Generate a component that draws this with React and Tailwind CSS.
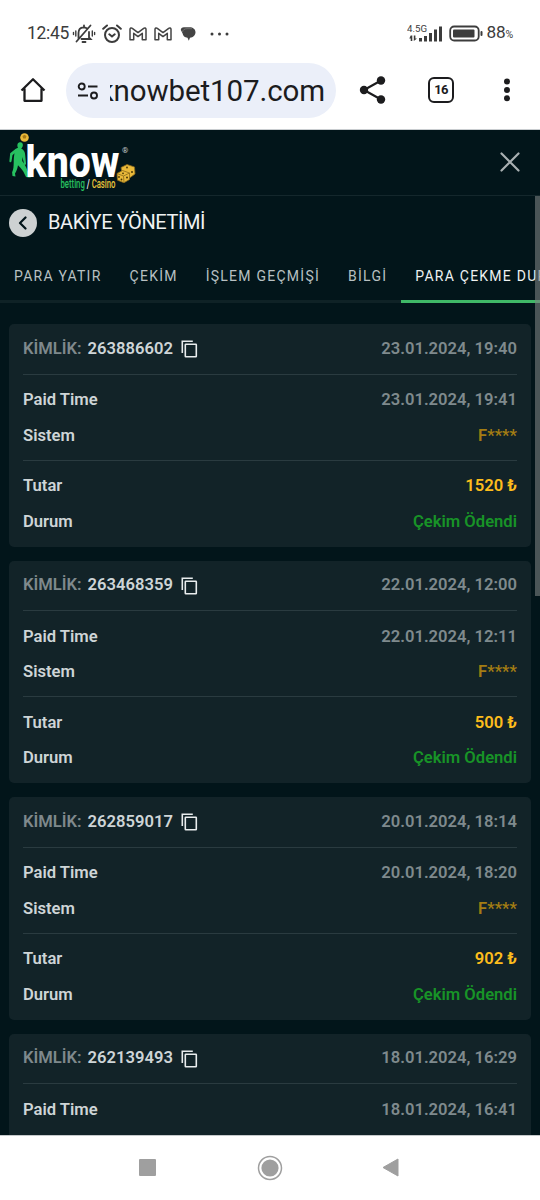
import React from 'react';

const transactions = [
  { id: '263886602', date: '23.01.2024, 19:40', paid: '23.01.2024, 19:41', system: 'F****', amount: '1520 ₺', status: 'Çekim Ödendi' },
  { id: '263468359', date: '22.01.2024, 12:00', paid: '22.01.2024, 12:11', system: 'F****', amount: '500 ₺', status: 'Çekim Ödendi' },
  { id: '262859017', date: '20.01.2024, 18:14', paid: '20.01.2024, 18:20', system: 'F****', amount: '902 ₺', status: 'Çekim Ödendi' },
  { id: '262139493', date: '18.01.2024, 16:29', paid: '18.01.2024, 16:41' },
];

const tabs = ['PARA YATIR', 'ÇEKİM', 'İŞLEM GEÇMİŞİ', 'BİLGİ', 'PARA ÇEKME DURUMU'];

const MailIcon = () => (
  <svg width="18" height="14" viewBox="0 0 18 14" fill="none" stroke="#444" strokeWidth="1.5" strokeLinejoin="round">
    <path d="M1 12.8V2.2C1 1 2.4.6 3.3 1.3L9 5.6l5.7-4.3C15.6.6 17 1 17 2.2v10.6h-3.7V6.3L9 9.6 4.7 6.3v6.5z" />
  </svg>
);

const StatusBar = () => (
  <div className="h-[62px] pt-[5px] flex items-center justify-between pl-[27px] pr-[27px] text-[#3c3c3c] shrink-0">
    <div className="flex items-center">
      <span className="text-[17.5px] w-[44px] tracking-[-0.3px] whitespace-nowrap">12:45</span>
      <svg className="ml-[1px]" width="24" height="20" viewBox="0 0 24 20" fill="none" stroke="#3c3c3c" strokeWidth="1.8" strokeLinecap="round">
        <path d="M6.5 14.5V9c0-3.200 2-5.500 5-5.700 1.400 0 2.300.400 3.200 1M17 8v5.500l1.500 1.500H9.500M12 3V1.500M10.500 18h3M4.500 17.500L18.500 1.500" />
        <path d="M3.800 7v5M20.300 7v5M1.500 8.500v2M22.600 8.500v2" strokeWidth="1.4" />
      </svg>
      <svg className="ml-[6px]" width="20" height="20" viewBox="0 0 20 20" fill="none" stroke="#3c3c3c" strokeWidth="2" strokeLinecap="round">
        <circle cx="10" cy="11" r="7" />
        <path d="M1.200 4.800L5 1.500M18.800 4.800L15 1.500M7.300 10.300l2.700 2.200 2.700-2.200" />
      </svg>
      <div className="flex gap-[7px] ml-[7px]">
        <MailIcon />
        <MailIcon />
      </div>
      <svg className="ml-[8px]" width="16" height="16" viewBox="0 0 16 16" fill="#444">
        <path d="M4 1.200h5.500c3.500 0 6 2 6 5s-2.500 5.300-5.500 5.500l-1.200 3L7.500 11.700C4.600 11.500 3 9.800 2.500 7.200L.8 4C.8 2.300 2 1.200 4 1.200z" />
        <path d="M2.500 6C2.700 4 4.500 2.700 7 2.700h5" stroke="#999" strokeWidth=".5" fill="none" />
      </svg>
      <svg className="ml-[14px]" width="20" height="4" viewBox="0 0 20 4" fill="#3c3c3c">
        <circle cx="2" cy="2" r="1.500" />
        <circle cx="9.500" cy="2" r="1.500" />
        <circle cx="17" cy="2" r="1.500" />
      </svg>
    </div>
    <div className="flex items-center">
      <svg width="37" height="20" viewBox="0 0 37 20" fill="#3c3c3c" className="font-[Roboto,sans-serif]">
        <text x="0" y="8" fontSize="9.500" textLength="20" lengthAdjust="spacingAndGlyphs">4.5G</text>
        <path d="M3.700 11.500h1.600V17H3.700v-2.500H2.300zM6.800 11.500h1.600v3H10L6.800 17z" />
        <path d="M12 14h3v3.500h-3zM17 12h3v5.500h-3zM22 9h3v8.500h-3zM27 5.500h3v12h-3zM32 2.500h3v15h-3z" />
      </svg>
      <svg className="ml-[5px]" width="34" height="17" viewBox="0 0 34 17">
        <rect x="1.200" y="1.500" width="28.500" height="14" rx="4" fill="none" stroke="#3c3c3c" strokeWidth="1.800" />
        <rect x="4" y="4.500" width="21.500" height="8" rx="1" fill="#3c3c3c" />
        <rect x="31.500" y="6" width="2" height="5" rx="1" fill="#3c3c3c" />
      </svg>
      <span className="ml-[4px] text-[17.2px] leading-5 tracking-[-0.2px]">
        88<span className="text-[10.5px]">%</span>
      </span>
    </div>
  </div>
);

const BrowserBar = () => (
  <div className="h-[68px] flex items-start shrink-0 pt-px border-b border-[#c9cdd0]">
    <svg className="ml-[20px] mt-[14px]" width="26" height="26" viewBox="0 0 26 26" fill="none" stroke="#1c1c1e" strokeWidth="2.300" strokeLinejoin="round">
      <path d="M1.500 13.500L13 2.300l11.500 11.200M4.500 11.500v12.300h17V11.500" />
    </svg>
    <div className="ml-[20px] w-[270px] h-[55px] rounded-full bg-[#ebeff9] flex items-center">
      <svg className="ml-[11px]" width="22" height="18" viewBox="0 0 22 18" fill="none" stroke="#1c1c1e" strokeWidth="1.900">
        <circle cx="4.700" cy="4.500" r="3" />
        <path d="M11 4.500h9.500M1 13.500h10" />
        <circle cx="17" cy="13.500" r="3" />
      </svg>
      {/* Long address keeps its end in view */}
      <div className="ml-[11px] w-[215px] overflow-hidden flex justify-end text-[29.5px] leading-[36px] text-[#1c1c1e]">
        <span className="tracking-[-0.1px]">knowbet107.com</span>
      </div>
    </div>
    <svg className="ml-[23px] mt-[13px]" width="28" height="28" viewBox="0 0 28 28" fill="#1c1c1e">
      <path d="M22 4.500L5 14l17 9.500" fill="none" stroke="#1c1c1e" strokeWidth="2.200" />
      <circle cx="22" cy="4.500" r="4.200" />
      <circle cx="5" cy="14" r="4.200" />
      <circle cx="22" cy="23.500" r="4.200" />
    </svg>
    <div className="ml-[41px] mt-[14px] w-[26px] h-[26px] rounded-[6px] border-[2.5px] border-[#1c1c1e] flex items-center justify-center text-[13px] tracking-[-0.6px] font-bold text-[#1c1c1e]">
      16
    </div>
    <svg className="ml-[49px] mt-[15px]" width="8" height="24" viewBox="0 0 8 24" fill="#1c1c1e">
      <circle cx="4" cy="3.500" r="3" />
      <circle cx="4" cy="12" r="3" />
      <circle cx="4" cy="20.300" r="3" />
    </svg>
  </div>
);

const Logo = () => (
  <svg width="140" height="62" viewBox="0 0 140 62" className="font-[Roboto,sans-serif]">
    {/* Player with ball */}
    <circle cx="24.500" cy="7.500" r="4.300" fill="#e9b93a" />
    <path d="M22.500 6l2-1.300L26.500 6l-.8 2.500h-2.500z" fill="#a87b16" />
    <path d="M19 12.500c2-1 4 .3 3.900 2.500-.1 1.700-.8 2.800-1.800 3.500 2.600 1.200 3.900 3.200 4.100 6.500l.8 8.500c.1 1.500-1.500 1.700-1.900.4L22.500 27l-.3 4c2.200 3.300 4.100 5.500 5.300 10l3.500 5.200c.5 1.200-1.200 1.500-2 1.200l-3-.4-2.700-5.500c-2-3-3.800-4.800-5.300-6.300-.6 3.500-1.500 6-3 8.200l.5 3.200-3-.6-.4-3.700c1.500-3 1.500-6 1.600-9.600 0-4 .3-7 .8-9.500l-2 2-1 6c-.3 1.600-2.200 1.400-2.100-.2l.8-7.700 5.600-4.500 2.200-1c-1.200-2-.8-4.600 1-5.300z" fill="#27c160" />
    <text x="25.500" y="46.500" fontSize="44" fontWeight="800" fill="#fff" textLength="94" lengthAdjust="spacingAndGlyphs">know</text>
    <text x="122" y="22.500" fontSize="8" fill="#c6cccd">®</text>
    {/* Dice */}
    <g fill="#e9b93a" stroke="#8a6a1a" strokeWidth=".8" strokeLinejoin="round">
      <path d="M121 37.500l6-3 7.500 2.500.5 7-5.500 4-7-3z" />
      <path d="M117 43.500l5.500-3 7 2.500v6.500l-5.500 3.200-6.500-2.500z" />
      <path d="M117 43.500l6.500 2.500 6-3M123.500 46l.5 6.500" fill="none" />
    </g>
    <g fill="#4a3807">
      <circle cx="119" cy="47" r=".9" />
      <circle cx="121.500" cy="49.500" r=".9" />
      <circle cx="127" cy="47.500" r="1" />
      <circle cx="123" cy="43.300" r=".9" />
      <circle cx="127" cy="37.500" r=".9" />
      <circle cx="132" cy="42" r="1" />
    </g>
    <text x="60.500" y="57.500" fontSize="12" fontWeight="500" fill="#27c160" textLength="55" lengthAdjust="spacingAndGlyphs">
      betting <tspan fill="#fff">/</tspan> <tspan fill="#e9c53a">Casino</tspan>
    </text>
  </svg>
);

const CopyIcon = () => (
  <svg className="ml-[8px]" width="17" height="18" viewBox="0 0 17 18" fill="none" stroke="#e9edee" strokeWidth="1.600">
    <path d="M1.300 13V1.300h10.500" />
    <rect x="4.300" y="4.300" width="11" height="12.500" rx=".5" />
  </svg>
);

const Row = ({ label, value, valueClass }) => (
  <div className="flex items-center justify-between h-[35.5px]">
    <span>{label}</span>
    <span className={valueClass}>{value}</span>
  </div>
);

const TransactionCard = ({ item }) => (
  <div className="rounded-[5px] bg-[#122328] px-[14px] text-[16.6px] font-semibold text-[#ced5d7] shrink-0">
    <div className="flex items-center justify-between h-[50.5px] pt-px border-b border-[#2a3b40]">
      <div className="flex items-center">
        <span className="text-[#7f898c]">KİMLİK:</span>
        <span className="ml-[6px]">{item.id}</span>
        <CopyIcon />
      </div>
      <span className="text-[#7f8a8d]">{item.date}</span>
    </div>
    <div className="h-[86px] pt-[8.4px] border-b border-[#2a3b40]">
      <Row label="Paid Time" value={item.paid} valueClass="text-[#7f8a8d]" />
      {item.system && <Row label="Sistem" value={item.system} valueClass="text-[#a37d13]" />}
    </div>
    {item.amount && (
      <div className="h-[86px] pt-[8.4px]">
        <Row label="Tutar" value={item.amount} valueClass="text-[#fdbd1c]" />
        <Row label="Durum" value={item.status} valueClass="text-[#189327]" />
      </div>
    )}
  </div>
);

const NavBar = () => (
  <div className="h-[65px] bg-white flex items-center shrink-0 border-t border-[#c5c9cb] pb-px">
    <div className="ml-[139px] w-[17px] h-[17px] rounded-[1px] bg-[#9f9f9f]"></div>
    <svg className="ml-[101px]" width="26" height="26" viewBox="0 0 26 26" fill="#9f9f9f">
      <circle cx="13" cy="13" r="11.500" fill="none" stroke="#9f9f9f" strokeWidth="1.500" />
      <circle cx="13" cy="13" r="8.600" />
    </svg>
    <svg className="ml-[99px]" width="17" height="19" viewBox="0 0 17 19" fill="#9f9f9f" stroke="#9f9f9f" strokeLinejoin="round">
      <path d="M16 1v17L1 9.500z" />
    </svg>
  </div>
);

const App = () => {
  return (
    <div className="w-[540px] h-[1200px] flex flex-col overflow-hidden bg-white font-[Roboto,sans-serif]">
      <StatusBar />
      <BrowserBar />

      <div className="h-[1005px] shrink-0 flex flex-col bg-[#02151a] overflow-hidden">
        {/* Site header */}
        <div className="h-[66px] shrink-0 flex items-start justify-between border-b border-[#14272c]">
          <Logo />
          <svg className="mt-[22px] mr-[20px]" width="20" height="20" viewBox="0 0 20 20" fill="none" stroke="#a9b0b2" strokeWidth="2.200" strokeLinecap="round">
            <path d="M1.500 1.500l17 17M18.500 1.500l-17 17" />
          </svg>
        </div>

        <div className="relative flex-1 flex flex-col overflow-hidden">
          <div className="h-[53px] shrink-0 flex items-center pl-[9px]">
            <div className="w-[28px] h-[28px] rounded-full bg-[#cdd1d2] flex items-center justify-center">
              <svg width="10" height="14" viewBox="0 0 10 14" fill="none" stroke="#02151a" strokeWidth="2.200" strokeLinecap="round" strokeLinejoin="round">
                <path d="M7.500 1.500L2 7l5.500 5.500" />
              </svg>
            </div>
            <h1 className="ml-[11px] pb-[2px] text-[20px] tracking-[-0.4px] text-[#eff2f2]">BAKİYE YÖNETİMİ</h1>
          </div>

          {/* Tabs */}
          <div className="h-[54px] shrink-0 flex overflow-hidden text-[14px] tracking-[1.25px] whitespace-nowrap">
            {tabs.map((tab, i) => (
              <div
                key={tab}
                className={`shrink-0 px-[14px] pt-[3px] flex items-center border-b-[3px] ${
                  i === 4 ? 'border-[#3fb867] text-[#eef1f1]' : 'border-[#0f2226] text-[#b8c0c2]'
                }`}
              >
                {tab}
              </div>
            ))}
          </div>

          <div className="flex-1 flex flex-col gap-[14px] pt-[21px] px-[9px] overflow-hidden">
            {transactions.map((item) => (
              <TransactionCard key={item.id} item={item} />
            ))}
          </div>

          {/* Scroll thumb */}
          <div className="absolute right-0 top-0 w-[5px] h-[400px] bg-[#7c8080]/60"></div>
        </div>
      </div>

      <NavBar />
    </div>
  );
};

export default App;
